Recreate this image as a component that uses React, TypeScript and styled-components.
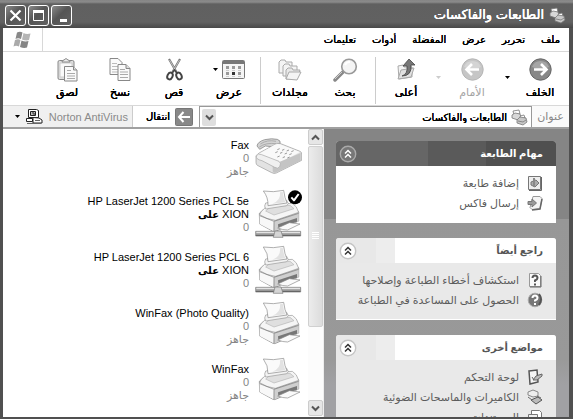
import React from 'react';
import styled, { createGlobalStyle } from 'styled-components';

const GlobalStyle = createGlobalStyle`
  * { box-sizing: border-box; }
  html, body, #root { height: 100%; }
  body { margin: 0; overflow: hidden; font-family: "Liberation Sans", "DejaVu Sans", sans-serif; font-size: 11px; color: #000; }
  button, input { font: inherit; color: inherit; margin: 0; padding: 0; border: 0; background: none; }
  svg { display: block; flex: none; }
  ul { list-style: none; margin: 0; padding: 0; }
  h1, h2 { margin: 0; font-weight: bold; }
`;

const Window = styled.div`
  height: 100vh;
  display: flex;
  flex-direction: column;
  background: #fff;
  border: solid #505050;
  border-width: 0 4px 2px 3px;
`;

const TitleBar = styled.header`
  flex: none;
  height: 28px;
  margin: 0 -4px 0 -3px;
  padding: 2px 7px 0 5px;
  display: flex;
  align-items: center;
  justify-content: space-between;
  color: #fff;
  background: linear-gradient(#858585 0, #8b8b8b 2px, #606060 4px, #616161 22px, #484848 28px);
`;

const Title = styled.h1`
  display: flex;
  align-items: center;
  gap: 5px;
  font-size: 13px;
  font-weight: normal;
  text-shadow: 0 0 0 #fff, 0 0 0 #fff;
  line-height: 20px;
`;

const WindowButtons = styled.div`
  display: flex;
  gap: 2px;
`;

const WindowButton = styled.button`
  width: 21px;
  height: 21px;
  border: 1px solid #fff;
  border-radius: 3px;
  background: linear-gradient(135deg, #8b8b8b, #555 45%, #626262);
`;

const MenuBar = styled.nav`
  flex: none;
  height: 24px;
  display: flex;
  justify-content: space-between;
  border-bottom: 1px solid #d8d8d8;
`;

const MenuItems = styled.div`
  display: flex;
  align-items: center;
  gap: 16px;
  padding-right: 9px;
`;

const MenuItem = styled.button`
  font-size: 10px;
  text-shadow: 0 0 0 #000, 0 0 0 #000;
  line-height: 20px;
`;

const Flag = styled.div`
  width: 40px;
  display: grid;
  place-items: center;
  border-right: 1px solid #d8d8d8;
`;

const Toolbar = styled.div`
  flex: none;
  height: 54px;
  display: flex;
  padding: 5px 1px 0 0;
  border-bottom: 1px solid #d8d8d8;
`;

const Tool = styled.button<{ $width: number }>`
  width: ${(p) => p.$width}px;
  display: flex;
  flex-direction: column;
  align-items: center;
  gap: 2px;
  font-size: 11px;
  text-shadow: 0 0 0 #000, 0 0 0 #000;
  line-height: 16px;
  white-space: nowrap;
  &:disabled { color: #a4a4a4; text-shadow: none; }
`;

const ToolIcon = styled.span`
  height: 25px;
  display: flex;
  align-items: center;
  gap: 4px;
`;

const DropButton = styled.button<{ $width: number }>`
  width: ${(p) => p.$width}px;
  height: 40px;
  display: grid;
  place-items: center;
`;

const Separator = styled.span`
  width: 1px;
  margin: 0 2px 1px;
  background: #ccc;
`;

const AddressBar = styled.div`
  flex: none;
  height: 23px;
  display: flex;
  align-items: stretch;
  border-bottom: 2px solid #a0a0a0;
`;

const AddressLabel = styled.label`
  width: 37px;
  display: grid;
  place-items: center;
  color: #858585;
  background: #fafafa;
`;

const Combo = styled.div`
  flex: 1;
  min-width: 0;
  display: flex;
  align-items: center;
  gap: 4px;
  padding: 0 3px 0 2px;
  border: 1px solid #999;
  border-bottom: 0;
`;

const AddressInput = styled.input`
  flex: 1;
  min-width: 0;
  height: 18px;
  font-size: 10px;
  text-shadow: 0 0 0 #000, 0 0 0 #000;
  outline: none;
`;

const ComboButton = styled.button`
  width: 14px;
  height: 17px;
  display: grid;
  place-items: center;
  border-radius: 2px;
  background: #dedede;
`;

const GoButton = styled.button`
  width: 67px;
  display: flex;
  align-items: center;
  gap: 5px;
  padding-right: 6px;
  font-size: 10px;
  text-shadow: 0 0 0 #000, 0 0 0 #000;
  border-left: 1px solid #ccc;
`;

const Norton = styled.button`
  width: 129px;
  display: flex;
  align-items: center;
  gap: 6px;
  padding-right: 4px;
  font-size: 11px;
  color: #8a8a8a;
  white-space: nowrap;
  background: #f0f0f0;
`;

const Content = styled.div`
  flex: 1;
  min-height: 0;
  display: flex;
`;

const Sidebar = styled.aside`
  flex: none;
  width: 245px;
  overflow: hidden;
  padding: 12px 13px 0 12px;
  display: flex;
  flex-direction: column;
  gap: 15px;
  background: linear-gradient(#858585 0, #858585 90px, #979797 90px, #999 230px, #a1a1a4 256px);
`;

const Panel = styled.section<{ $primary?: boolean }>`
  flex: none;
  border-radius: 3px 3px 0 0;
  overflow: hidden;
  border-bottom: 1px solid #fff;
  background: ${(p) => (p.$primary ? '#fff' : '#e9e9e9')};
`;

const PanelHead = styled.div<{ $primary?: boolean }>`
  height: 25px;
  display: flex;
  align-items: center;
  justify-content: space-between;
  padding: 0 13px 0 3px;
  color: ${(p) => (p.$primary ? '#fff' : '#555')};
  background: ${(p) =>
    p.$primary
      ? 'linear-gradient(to left, #505050 0 70px, #5a5a5a 70px 128px, #666 128px)'
      : 'linear-gradient(to left, #fff 0 161px, #ededed 161px 180px, #e8e8e8 180px)'};
`;

const PanelTitle = styled.h2`
  font-size: 10px;
  line-height: 20px;
`;

const Collapse = styled.button`
  width: 18px;
  height: 18px;
`;

const Links = styled.ul`
  && { padding: 7px 13px 9px; }
`;

const TaskLink = styled.a`
  height: 20px;
  display: flex;
  align-items: center;
  gap: 8px;
  color: #5c5c5c;
  font-size: 11px;
  text-decoration: none;
  white-space: nowrap;
`;

const ScrollTrack = styled.div`
  flex: none;
  width: 16px;
  display: flex;
  flex-direction: column;
  padding-bottom: 1px;
  background: #fcfcfc;
  border-right: 1px solid #eee;
`;

const ScrollButton = styled.button`
  height: 16px;
  display: grid;
  place-items: center;
  border-radius: 2px;
  border: 1px solid #ccc;
  background: #e6e6e6;
`;

const Thumb = styled.div`
  flex: 0 0 63%;
  display: grid;
  place-items: center;
  background: linear-gradient(to right, #ececec, #dcdcdc);
  border: 1px solid #d0d0d0;
  border-radius: 2px;
  margin: 1px 0 auto;
`;

const PrinterList = styled.ul`
  flex: 1;
  min-width: 0;
  overflow: hidden;
  && { padding: 4px 6px 0 0; }
`;

const Printer = styled.li`
  height: 56px;
  display: flex;
  gap: 6px;
`;

const PrinterText = styled.div`
  padding-top: 6px;
  display: flex;
  flex-direction: column;
  align-items: flex-start;
  font-size: 11px;
  line-height: 13px;
  white-space: nowrap;
`;

const Strong = styled.b`
  font-size: 10px;
`;

const Muted = styled.span`
  color: #858585;
`;

const Down = ({ color = '#000' }: { color?: string }) => (
  <svg width="5" height="3" viewBox="0 0 5 3"><path d="M0 0h5L2.500 3z" fill={color} /></svg>
);

const Chevron = ({ up }: { up?: boolean }) => (
  <svg width="9" height="7" viewBox="0 0 9 7">
    <path d={up ? 'M1 5.500 4.500 2 8 5.500' : 'M1 1.500 4.500 5 8 1.500'} fill="none" stroke="#555" strokeWidth="2" />
  </svg>
);

const MiniPrinters = () => (
  <svg width="17" height="17" viewBox="0 0 17 17" stroke="#777" strokeWidth=".8">
    <path d="M2 2l6-1 1 4-6 1z" fill="#fff" />
    <path d="M1 6l3-2 5 1 1 3-3 3-6-2z" fill="#d8d8d8" />
    <path d="M9 7l4-1 1 3-4 1z" fill="#fff" />
    <path d="M6 11l3-3 6 1 1 4-4 3-6-2z" fill="#c8c8c8" />
    <path d="M7 12l5 1 3-2" fill="none" />
  </svg>
);

const RoundArrow = ({ left, pale }: { left?: boolean; pale?: boolean }) => (
  <svg width="23" height="23" viewBox="0 0 23 23">
    <circle cx="11.500" cy="11.500" r="10.700" fill={pale ? '#c6c6c6' : '#888'} stroke={pale ? '#b5b5b5' : '#666'} />
    <path d="M3 9a9 9 0 0 1 17 0q-8 4-17 0" fill="#fff" opacity=".25" />
    <path d={left ? 'M18 11.500H6M11 6l-5.500 5.500L11 17' : 'M5 11.500h12M12 6l5.500 5.500L12 17'} fill="none" stroke="#fff" strokeWidth="2.600" />
  </svg>
);

const FolderUp = () => (
  <svg width="20" height="23" viewBox="0 0 20 23">
    <path d="M2 8l5-1 1 2h8v10L3 21z" fill="#f2f2f2" stroke="#aaa" />
    <path d="M2 21l3-9 13-2-3 9z" fill="#e1e1e1" stroke="#aaa" />
    <path d="M6 18q6-2 5-10H7l6-7 6 6h-4q1 11-9 11z" fill="#777" stroke="#444" strokeWidth=".8" />
  </svg>
);

const SearchIcon = () => (
  <svg width="25" height="24" viewBox="0 0 25 24">
    <path d="M10 14l-8 8" stroke="#888" strokeWidth="3.500" strokeLinecap="round" />
    <path d="M9 14l-7 7" stroke="#ccc" strokeWidth="1" />
    <circle cx="16" cy="8.500" r="7.300" fill="#f4f4f4" stroke="#999" strokeWidth="1.600" />
    <path d="M12 7a5 5 0 0 1 5-3" fill="none" stroke="#fff" strokeWidth="2" />
  </svg>
);

const FoldersIcon = () => (
  <svg width="24" height="22" viewBox="0 0 24 22" fill="#f4f4f4" stroke="#aaa">
    <path d="M1 14V3l2-2h4l1 2h6v11z" />
    <path d="M5 17V7l2-2h4l1 2h7v10z" />
    <path d="M8 20V11l2-2h4l1 2h7l-3 9z" fill="#e8e8e8" />
    <path d="M8 20l3-7h12l-4 8z" />
  </svg>
);

const ViewsIcon = () => (
  <svg width="23" height="19" viewBox="0 0 23 19">
    <rect x=".5" y=".5" width="22" height="18" rx="1" fill="#f5f5f5" stroke="#777" />
    <path d="M1 1h21v3H1z" fill="#777" />
    <path d="M4 6h3v3H4zM10 6h3v3h-3zM16 6h3v3h-3zM4 12h3v3H4zM16 12h3v3h-3z" fill="#999" />
    <path d="M10 12h3v3h-3z" fill="#333" />
    <path d="M4 10.500h3M10 10.500h3M16 10.500h3M4 16.500h3M10 16.500h3M16 16.500h3" stroke="#ccc" />
  </svg>
);

const CutIcon = () => (
  <svg width="17" height="23" viewBox="0 0 17 23">
    <path d="M3 1l8 14M14 1L6 15" stroke="#777" strokeWidth="2.200" />
    <path d="M3.500 2l7 12M13.500 2l-7 12" stroke="#ddd" strokeWidth=".7" />
    <ellipse cx="4" cy="18" rx="2.500" ry="3.500" transform="rotate(25 4 18)" fill="none" stroke="#444" strokeWidth="2" />
    <ellipse cx="13" cy="18" rx="2.500" ry="3.500" transform="rotate(-25 13 18)" fill="none" stroke="#444" strokeWidth="2" />
    <path d="M6 15l2.500-3 2.500 3" fill="none" stroke="#444" strokeWidth="1.500" />
  </svg>
);

const CopyIcon = () => (
  <svg width="22" height="23" viewBox="0 0 22 23" fill="#fafafa" stroke="#888">
    <path d="M1 .5h8l4 4v12H1z" />
    <path d="M3 5.500h5M3 8.500h7M3 11.500h7M3 14h6" stroke="#bbb" />
    <path d="M9 6.500h8l4 4v12H9z" />
    <path d="M17 6.500v4h4" fill="#ddd" />
    <path d="M11 11.500h5M11 14h8M11 16.500h8M11 19.500h8" stroke="#aaa" />
  </svg>
);

const PasteIcon = () => (
  <svg width="21" height="24" viewBox="0 0 21 24" fill="#fafafa" stroke="#888">
    <rect x="1" y="2.500" width="16" height="19" rx="1.500" fill="#dedede" />
    <path d="M3 5h12v14H3z" stroke="#ccc" />
    <path d="M5 4q0-2 2-2 2-3 4 0 2 0 2 2z" fill="#eee" />
    <path d="M7.500 8.500h9l3.500 3.500v11H7.500z" />
    <path d="M16.500 8.500V12H20" fill="#ddd" />
    <path d="M10 12.500h4M10 15.500h8M10 18h8M10 20.500h8" stroke="#aaa" />
  </svg>
);

const GoIcon = () => (
  <svg width="18" height="18" viewBox="0 0 18 18">
    <rect x=".5" y=".5" width="17" height="17" rx="1" fill="#888" stroke="#777" />
    <path d="M15 9H4M8.500 4L4 9l4.500 5" fill="none" stroke="#fff" strokeWidth="2" />
  </svg>
);

const NortonIcon = () => (
  <svg width="17" height="17" viewBox="0 0 17 17" fill="#fff" stroke="#222">
    <path d="M2.500 1.500h8l2 1v7h-10z" />
    <path d="M4.500 3.500h5v4h-5z" fill="#bbb" />
    <path d="M6 5h2v2" />
    <path d="M.5 10.500h6v3h-6zM7 9.500l6 .5 3 2v3H7z" />
    <path d="M1 15.500h14M9 12.500h5" stroke="#666" />
  </svg>
);

const FlagIcon = () => (
  <svg width="19" height="18" viewBox="0 0 19 18">
    <path d="M4 1.500q3-1.500 5.500 0L8 8Q5 6.500 2.500 8z" fill="#888" />
    <path d="M10.500 2q3 1.500 7 .5L16 9q-3 1-7-.5z" fill="#b5b5b5" />
    <path d="M2 9q3-1.500 5.500 0L6 15.500Q3 14 .5 15.500z" fill="#aaa" />
    <path d="M8.500 9.500q3.500 1.500 7 .5L14 16.500q-3 1-7-.5z" fill="#858585" />
  </svg>
);

const CollapseIcon = ({ primary }: { primary?: boolean }) => (
  <svg width="18" height="18" viewBox="0 0 18 18">
    <circle cx="9" cy="9" r="7.700" fill={primary ? '#777' : '#fff'} stroke={primary ? '#aaa' : '#c4c4c4'} strokeWidth="1.400" />
    <path d="M6 8.500l3-3 3 3M6 12.500l3-3 3 3" fill="none" stroke={primary ? '#fff' : '#333'} strokeWidth="1.500" />
  </svg>
);

const FaxIcon = () => (
  <svg width="47" height="50" viewBox="0 0 141 150" strokeLinejoin="round">
    <path d="M6 39Q8 26 29 20q22-5 38-1 12 4 8 14l-7 10-37-4-17 10z" fill="#d3d3d3" stroke="#777" strokeWidth="2" />
    <path d="M16 33q21-14 47-8M13 42q20-14 50-10" stroke="#999" strokeWidth="2" fill="none" />
    <path d="M3 68l11-9 47-25q6-4 16-2l58 23q6 3 5 8v19l-76 38q-7 3-14-1L7 97q-4-3-4-9z" fill="#e2e2e2" stroke="#999" strokeWidth="2" />
    <path d="M7 65l52-30q8-4 16-1l60 23-65 35q-5 3-12 1z" fill="#f9f9f9" />
    <path d="M53 95l84-35v23l-76 36q-8 1-8-6z" fill="#c4c4c4" />
    <path d="M4 69q5-10 16-4l52 20q8 6 2 16-5 8-15 2L21 83Q2 79 4 69z" fill="#f0f0f0" stroke="#a5a5a5" strokeWidth="2" />
    <path d="M67 50l7-3m7 5l7-3m7 5l7-3m7 5l7-3M61 59l7-3m7 5l7-3m7 5l7-3m7 5l7-3M67 72l7-3m9 5l7-3m7 4l7-3" stroke="#999" strokeWidth="3" />
  </svg>
);

const PrinterIcon = ({ network, checked }: { network?: boolean; checked?: boolean }) => (
  <svg width="47" height="50" viewBox="0 0 141 150" strokeLinejoin="round">
    <path d="M13 73l1 32 40 22q5 2 10-1l67-30V69L111 46 35 53z" fill="#ddd" stroke="#777" strokeWidth="2" />
    <path d="M14 78l43 16-1 33-42-22z" fill="#f8f8f8" />
    <path d="M57 94l74-24v27l-75 30z" fill="#cfcfcf" />
    <path d="M14 77q2-8 12-17l12-11 74-6q14 8 19 27L61 94q-27-3-47-17z" fill="#f5f5f5" stroke="#999" strokeWidth="2" />
    <path d="M32 66l14-12 59-5 12 10-60 19z" fill="#dfdfdf" stroke="#b5b5b5" strokeWidth="2" />
    <path d="M14 80l43 17 74-24M57 98v29" fill="none" stroke="#777" strokeWidth="2" />
    <path d="M29 51l3-9 63-8 5 10-5 6-63 10z" fill="#f2f2f2" stroke="#999" strokeWidth="2" />
    <path d="M25 6q30 5 61-2 3 24 10 38l-57 8Q40 25 25 6z" fill="#fafafa" stroke="#888" strokeWidth="2" />
    <path d="M75 10l8-2q3 20 8 32l-39 4q26-9 23-34z" fill="#e2e2e2" />
    <path d="M69 106l57-19v11l-56 20z" fill="#777" />
    <path d="M68 117l35-16 32 4-37 18q-15 0-30-6z" fill="#fafafa" stroke="#888" strokeWidth="2" />
    {network && (
      <>
        <rect x="2" y="127" width="135" height="14" fill="#aaa" stroke="#777" strokeWidth="2" />
        <path d="M3 139h133" stroke="#666" strokeWidth="4" />
        <path d="M4 130h131" stroke="#eee" strokeWidth="3" />
        <path d="M60 126h18l6 19H55z" fill="#d5d5d5" stroke="#777" strokeWidth="2" />
      </>
    )}
    {checked && (
      <>
        <circle cx="120" cy="25" r="21" fill="#000" />
        <path d="M109 25l8 9 14-19" fill="none" stroke="#fff" strokeWidth="6" />
      </>
    )}
  </svg>
);

type LinkKind = 'add' | 'send' | 'help' | 'ask' | 'panel' | 'camera' | 'docs';

const LinkArt: Record<LinkKind, React.ReactNode> = {
  add: (<><path d="M1.500 1.500h12v13h-12z" fill="#eee" stroke="#777" /><path d="M14.500 2v13.500H2" stroke="#666" fill="none" /><path d="M4 7l5-2 3 3-4 4-4-2z" fill="#aaa" stroke="#777" /><path d="M7 3v9" stroke="#888" strokeWidth="2" /></>),
  send: (<><path d="M6 1.500h7l2 2-2 10-8 1-2-2z" fill="#f4f4f4" stroke="#999" /><path d="M15 4l-2 10-8 1" stroke="#666" fill="none" strokeWidth="1.500" /><path d="M1 6.500h4V4l4.500 4L5 12V9.500H1z" fill="#999" stroke="#777" /></>),
  help: (<><path d="M2.500 1.500h9l2 2v11h-11z" fill="#fafafa" stroke="#999" /><path d="M14 4v11H3" stroke="#666" fill="none" /><path d="M5.500 6q0-2.500 2.500-2.500T10.500 6Q10.500 7.500 8 8.500V10M8 11.500v2" stroke="#555" strokeWidth="2" fill="none" /></>),
  ask: (<><circle cx="8" cy="8" r="6.800" fill="#777" stroke="#aaa" /><path d="M12 2q4 5 0 11" stroke="#555" fill="none" strokeWidth="2" /><path d="M5.500 6q0-2.500 2.500-2.500T10.500 6Q10.500 7.500 8 8.500V9.500M8 11v2" stroke="#fff" strokeWidth="2" fill="none" /></>),
  panel: (<><path d="M2 2l8-1 1 12-8 2z" fill="#f5f5f5" stroke="#555" strokeWidth="1.500" /><path d="M6 11l3-4 6-2v2l-5 4z" fill="#bbb" stroke="#666" /><path d="M5 8l2 3" stroke="#666" /></>),
  camera: (<><path d="M1 3l5-2 5 2v4L6 8 1 6z" fill="#eee" stroke="#888" /><path d="M4 11l7-3 4 3-6 4z" fill="#bbb" stroke="#555" /><path d="M1 8l4 3M10 7l4 2" stroke="#666" /></>),
  docs: (<><path d="M4.500 1.500h8l2 2v8h-10z" fill="#fff" stroke="#777" /><path d="M1.500 5.500h9v9h-9z" fill="#eee" stroke="#777" /></>),
};

const LinkIcon = ({ kind }: { kind: LinkKind }) => (
  <svg width="16" height="16" viewBox="0 0 16 16">{LinkArt[kind]}</svg>
);

const panels: { title: string; primary?: boolean; links: [LinkKind, string][] }[] = [
  { title: 'مهام الطابعة', primary: true, links: [['add', 'إضافة طابعة'], ['send', 'إرسال فاكس']] },
  { title: 'راجع أيضاً', links: [['help', 'استكشاف أخطاء الطباعة وإصلاحها'], ['ask', 'الحصول على المساعدة في الطباعة']] },
  { title: 'مواضع أخرى', links: [['panel', 'لوحة التحكم'], ['camera', 'الكاميرات والماسحات الضوئية'], ['docs', 'المستندات']] },
];

const printers: { name: string; host?: boolean; fax?: boolean; checked?: boolean }[] = [
  { name: 'Fax', fax: true },
  { name: 'HP LaserJet 1200 Series PCL 5e', host: true, checked: true },
  { name: 'HP LaserJet 1200 Series PCL 6', host: true },
  { name: 'WinFax (Photo Quality)' },
  { name: 'WinFax' },
];

const menus = ['ملف', 'تحرير', 'عرض', 'المفضلة', 'أدوات', 'تعليمات'];

export default function App() {
  return (
    <>
      <GlobalStyle />
      <Window dir="rtl" lang="ar">
        <TitleBar>
          <Title><MiniPrinters />الطابعات والفاكسات</Title>
          <WindowButtons>
            <WindowButton aria-label="تصغير">
              <svg width="19" height="19"><path d="M8 13h7v3H8z" fill="#fff" /></svg>
            </WindowButton>
            <WindowButton aria-label="تكبير">
              <svg width="19" height="19"><path d="M4.500 5v9.500h10V5" fill="none" stroke="#fff" /><path d="M4 4h11v3H4z" fill="#fff" /></svg>
            </WindowButton>
            <WindowButton aria-label="إغلاق">
              <svg width="19" height="19"><path d="M4.500 4.500l10 10M14.500 4.500l-10 10" stroke="#fff" strokeWidth="2.200" /></svg>
            </WindowButton>
          </WindowButtons>
        </TitleBar>

        <MenuBar>
          <MenuItems>{menus.map((m) => <MenuItem key={m}>{m}</MenuItem>)}</MenuItems>
          <Flag><FlagIcon /></Flag>
        </MenuBar>

        <Toolbar>
          <Tool $width={56}><ToolIcon><RoundArrow /></ToolIcon>الخلف</Tool>
          <DropButton $width={10} aria-label="سجل الخلف"><Down /></DropButton>
          <Tool $width={60} disabled><ToolIcon><RoundArrow left pale /></ToolIcon>الأمام</Tool>
          <DropButton $width={8} aria-label="سجل الأمام"><Down color="#ccc" /></DropButton>
          <Tool $width={56}><ToolIcon><FolderUp /></ToolIcon>أعلى</Tool>
          <Separator />
          <Tool $width={56}><ToolIcon><SearchIcon /></ToolIcon>بحث</Tool>
          <Tool $width={54}><ToolIcon><FoldersIcon /></ToolIcon>مجلدات</Tool>
          <Separator />
          <Tool $width={58}><ToolIcon><ViewsIcon /><Down /></ToolIcon>عرض</Tool>
          <Tool $width={52}><ToolIcon><CutIcon /></ToolIcon>قص</Tool>
          <Tool $width={56}><ToolIcon><CopyIcon /></ToolIcon>نسخ</Tool>
          <Tool $width={50}><ToolIcon><PasteIcon /></ToolIcon>لصق</Tool>
        </Toolbar>

        <AddressBar>
          <AddressLabel htmlFor="address">عنوان</AddressLabel>
          <Combo>
            <MiniPrinters />
            <AddressInput id="address" defaultValue="الطابعات والفاكسات" />
            <ComboButton aria-label="فتح القائمة"><Chevron /></ComboButton>
          </Combo>
          <GoButton><GoIcon />انتقال</GoButton>
          <Norton><bdi>Norton AntiVirus</bdi><NortonIcon /><Down /></Norton>
        </AddressBar>

        <Content>
          <Sidebar>
            {panels.map((p) => (
              <Panel key={p.title} $primary={p.primary}>
                <PanelHead $primary={p.primary}>
                  <PanelTitle>{p.title}</PanelTitle>
                  <Collapse aria-label={p.title}><CollapseIcon primary={p.primary} /></Collapse>
                </PanelHead>
                <Links>
                  {p.links.map(([kind, text]) => (
                    <li key={text}><TaskLink href="#"><LinkIcon kind={kind} />{text}</TaskLink></li>
                  ))}
                </Links>
              </Panel>
            ))}
          </Sidebar>
          <ScrollTrack>
            <ScrollButton aria-label="أعلى"><Chevron up /></ScrollButton>
            <Thumb><svg width="7" height="8"><path d="M0 .5h7M0 2.500h7M0 4.500h7M0 6.500h7" stroke="#fff" /></svg></Thumb>
            <ScrollButton aria-label="أسفل"><Chevron /></ScrollButton>
          </ScrollTrack>
          <PrinterList>
            {printers.map((p) => (
              <Printer key={p.name}>
                {p.fax ? <FaxIcon /> : <PrinterIcon network={p.host} checked={p.checked} />}
                <PrinterText>
                  <bdi>{p.name}</bdi>
                  {p.host && <span>XION <Strong>على</Strong></span>}
                  <Muted>0</Muted>
                  {!p.host && <Muted>جاهز</Muted>}
                </PrinterText>
              </Printer>
            ))}
          </PrinterList>
        </Content>
      </Window>
    </>
  );
}
